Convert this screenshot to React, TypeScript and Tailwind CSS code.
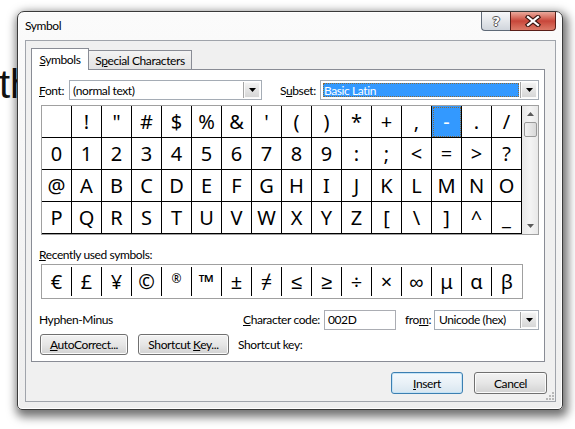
import React from "react";

const ui = "font-['Lato',sans-serif] text-[12px] leading-[15px] tracking-[-0.4px] text-black";
const glyph = "font-['Noto_Sans',sans-serif] text-[20px] leading-none tracking-normal";

const rows = [
  [" ", "!", '"', "#", "$", "%", "&", "'", "(", ")", "*", "+", ",", "-", ".", "/"],
  "0123456789:;<=>?".split(""),
  "@ABCDEFGHIJKLMNO".split(""),
  "PQRSTUVWXYZ[\\]^_".split(""),
];

const recent = ["€", "£", "¥", "©", "®", "™", "±", "≠", "≤", "≥", "÷", "×", "∞", "μ", "α", "β"];

const btn =
  "flex h-[21px] items-center justify-center rounded-[3px] border border-[#707070] bg-gradient-to-b from-[#f2f2f2] via-[#e6e6e6] to-[#d2d2d2] shadow-[inset_0_0_0_1px_#fbfbfb]";

function DropArrow() {
  return (
    <div className="flex h-full w-[17px] shrink-0 items-center justify-center border-l border-[#a5a5a5] bg-gradient-to-b from-[#f4f4f4] to-[#d4d4d4] shadow-[inset_0_0_0_1px_#fafafa]">
      <svg width="7" height="4" viewBox="0 0 7 4">
        <path d="M0 0h7L3.5 4z" fill="#000" />
      </svg>
    </div>
  );
}

function Select({ width, children }: { width: string; children: React.ReactNode }) {
  return (
    <div className={`flex h-[20px] ${width} items-stretch border border-[#a5acb5] bg-white p-[1px]`}>
      <div className="flex flex-1 items-center overflow-hidden whitespace-nowrap">{children}</div>
      <DropArrow />
    </div>
  );
}

function Scrollbar() {
  return (
    <div className="flex w-[16px] flex-col items-center bg-gradient-to-r from-[#e8e8e8] via-[#f4f4f4] to-[#e8e8e8]">
      <div className="flex h-[16px] items-center justify-center">
        <svg width="7" height="4" viewBox="0 0 7 4">
          <path d="M0 4h7L3.5 0z" fill="#5a5a5a" />
        </svg>
      </div>
      <div className="h-[15px] w-[13px] rounded-[2px] border border-[#9a9a9a] bg-gradient-to-r from-[#f2f2f2] to-[#d8d8d8]" />
      <div className="flex-1" />
      <div className="flex h-[16px] items-center justify-center">
        <svg width="7" height="4" viewBox="0 0 7 4">
          <path d="M0 0h7L3.5 4z" fill="#5a5a5a" />
        </svg>
      </div>
    </div>
  );
}

function TitleButtons() {
  return (
    <div className="mr-[6px] flex h-[19px]">
      <div className="flex w-[29px] items-center justify-center rounded-bl-[4px] border border-r-0 border-t-0 border-[#5f6a78] bg-gradient-to-b from-[#f7f8fa] via-[#e4e7eb] to-[#d0d5dc]">
        <span className="font-['DejaVu_Sans',sans-serif] text-[13px] font-bold leading-none text-white [text-shadow:1px_0_0_#555,-1px_0_0_#555,0_1px_0_#555,0_-1px_0_#555]">
          ?
        </span>
      </div>
      <div className="flex w-[46px] items-center justify-center rounded-br-[4px] border border-t-0 border-[#5a1e18] bg-gradient-to-b from-[#e9a99c] via-[#c8463a] to-[#dc7a68]">
        <svg width="16" height="12" viewBox="0 0 16 12">
          <path d="M3 2 L13 10 M13 2 L3 10" stroke="#3b1712" strokeWidth="4.4" strokeLinecap="square" />
          <path d="M3 2 L13 10 M13 2 L3 10" stroke="#ffffff" strokeWidth="2.2" strokeLinecap="square" />
        </svg>
      </div>
    </div>
  );
}

export default function App() {
  return (
    <div className="relative h-[429px] w-[575px] overflow-hidden bg-white">
      <div className="absolute left-[-1px] top-[64px] font-['Liberation_Sans',sans-serif] text-[40px] leading-[40px] text-[#111]">
        th
      </div>

      <div
        className={`absolute left-[17px] top-[11px] flex h-[399px] w-[546px] flex-col rounded-t-[7px] rounded-b-[5px] border border-[#3a3a3a] bg-gradient-to-b from-[#fbfbfb] to-[#eeeeee] shadow-[2px_4px_10px_3px_rgba(0,0,0,0.55),inset_0_0_0_1px_#ffffff] ${ui}`}
      >
        {/* title bar */}
        <div className="flex h-[28px] items-start justify-between">
          <div className="ml-[7px] mt-[6px]">Symbol</div>
          <TitleButtons />
        </div>

        {/* client area */}
        <div className="relative ml-[7px] flex h-[362px] w-[531px] flex-col border border-[#a0a4ab] bg-[#f0f0f0]">
          {/* tabs */}
          <div className="ml-[5px] mt-[7px] flex items-end">
            <div className="relative z-10 mb-[-1px] flex h-[22px] w-[58px] items-center justify-center border border-b-0 border-[#898c95] bg-white">
              <span>
                <u>S</u>ymbols
              </span>
            </div>
            <div className="flex h-[19px] w-[103px] items-center justify-center border-r border-t border-[#898c95] bg-gradient-to-b from-[#f3f3f3] to-[#e3e3e3]">
              <span>
                S<u>p</u>ecial Characters
              </span>
            </div>
          </div>

          {/* panel */}
          <div className="ml-[5px] flex h-[293px] w-[514px] flex-col border border-[#898c95] bg-white">
            <div className="ml-[7px] mt-[10px] flex items-center">
              <span className="w-[30px]">
                <u>F</u>ont:
              </span>
              <Select width="w-[193px]">
                <span className="pl-[2px]">(normal text)</span>
              </Select>
              <span className="ml-[18px] w-[40px]">
                S<u>u</u>bset:
              </span>
              <Select width="w-[219px]">
                <div className="m-[1px] flex h-[14px] flex-1 items-center bg-[#3399ff] pl-[1px] text-white outline-1 outline-offset-[-1px] outline-dotted outline-[#8a6a3a]">
                  Basic Latin
                </div>
              </Select>
            </div>

            {/* character grid */}
            <div className="ml-[9px] mt-[5px] flex w-[498px] border border-[#a0a0a0]">
              <div className={`grid grid-cols-[repeat(16,30px)] grid-rows-[repeat(4,32px)] ${glyph}`}>
                {rows.flatMap((r, ri) =>
                  r.map((ch, ci) => {
                    const sel = ri === 0 && ci === 13;
                    return (
                      <div
                        key={`${ri}-${ci}`}
                        className={`flex items-center justify-center border-b border-r border-black ${
                          sel
                            ? "bg-[#3399ff] text-white outline-1 outline-offset-[-2px] outline-dotted outline-[#8a6a3a]"
                            : ""
                        }`}
                      >
                        {ch}
                      </div>
                    );
                  }),
                )}
              </div>
              <Scrollbar />
            </div>

            <div className="ml-[7px] mt-[12px]">
              <u>R</u>ecently used symbols:
            </div>

            <div className="ml-[9px] mt-[2px] flex h-[35px] w-[482px] border border-[#a0a0a0] py-[2px]">
              {recent.map((ch, i) => (
                <div
                  key={ch}
                  className={`flex h-[29px] w-[30px] justify-center ${
                    i < recent.length - 1 ? "border-r border-black" : ""
                  } ${
                    ch === "®"
                      ? "items-start pt-[6px] font-['Noto_Sans',sans-serif] text-[12px] leading-none tracking-normal"
                      : `items-center ${glyph}`
                  }`}
                >
                  {ch}
                </div>
              ))}
            </div>

            <div className="ml-[7px] mt-[10px] flex h-[21px] items-center whitespace-nowrap">
              <span className="w-[204px]">Hyphen-Minus</span>
              <span className="w-[81px]">
                <u>C</u>haracter code:
              </span>
              <div className="flex h-[20px] w-[72px] items-center border border-[#abadb3] bg-white pl-[3px]">
                002D
              </div>
              <span className="ml-[9px] w-[29px]">
                fro<u>m</u>:
              </span>
              <Select width="w-[105px]">
                <span className="pl-[3px]">Unicode (hex)</span>
              </Select>
            </div>

            <div className="ml-[8px] mt-[4px] flex items-center whitespace-nowrap">
              <div className={`${btn} w-[88px]`}>
                <span>
                  <u>A</u>utoCorrect...
                </span>
              </div>
              <div className={`${btn} ml-[10px] w-[91px]`}>
                <span>
                  Shortcut <u>K</u>ey...
                </span>
              </div>
              <span className="ml-[9px]">Shortcut key:</span>
            </div>
          </div>

          {/* dialog buttons */}
          <div className="mr-[8px] mt-[10px] flex justify-end gap-[11px]">
            <div className="flex h-[22px] w-[72px] items-center justify-center rounded-[3px] border border-[#3c7fb1] bg-gradient-to-b from-[#f4f9fc] via-[#e9f1f7] to-[#d8e6f0] shadow-[inset_0_0_0_1px_#c4e3f6]">
              <span>
                <u>I</u>nsert
              </span>
            </div>
            <div className={`${btn} h-[22px] w-[73px]`}>Cancel</div>
          </div>

          {/* size grip */}
          <svg className="absolute bottom-[1px] right-[1px]" width="10" height="10" viewBox="0 0 10 10">
            <g fill="#b8b8b8">
              <rect x="8" y="2" width="2" height="2" />
              <rect x="5" y="5" width="2" height="2" />
              <rect x="8" y="5" width="2" height="2" />
              <rect x="2" y="8" width="2" height="2" />
              <rect x="5" y="8" width="2" height="2" />
              <rect x="8" y="8" width="2" height="2" />
            </g>
          </svg>
        </div>
      </div>
    </div>
  );
}
